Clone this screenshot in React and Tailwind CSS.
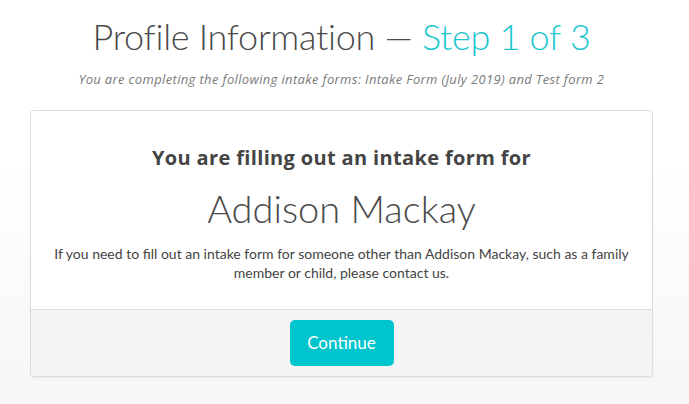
import React from "react";

const App = () => {
  return (
    <div
      className="min-h-screen w-full bg-gradient-to-b from-white from-40% to-[#f6f6f6] text-[#444]"
      style={{ fontFamily: "Lato, 'Open Sans', sans-serif" }}
    >
      <div className="ml-[30px] w-[623px] pt-[13px] pb-[28px]">
        <h1 className="text-center text-[36px] font-light leading-[46px] tracking-[-0.3px] text-[#4a4a4a]">
          Profile Information — <span className="text-[#1cc6cf]">Step 1 of 3</span>
        </h1>
        <p className="mt-[11px] text-center font-['Open_Sans'] text-[13px] italic tracking-[0.35px] text-[#7a7a7a]">
          You are completing the following intake forms: Intake Form (July 2019) and Test form 2
        </p>

        <div className="mt-[20px] overflow-hidden rounded-[4px] border border-[#dcdcdc] bg-white shadow-[0_1px_2px_rgba(0,0,0,0.06)]">
          <div className="px-2 pt-[33px] pb-[27px] text-center">
            <h2 className="font-['Open_Sans'] text-[20px] font-bold leading-[28px] tracking-[0.35px] text-[#444]">
              You are filling out an intake form for
            </h2>
            <div className="mt-[14px] text-[38px] font-light leading-[44px] text-[#4a4a4a]">
              Addison Mackay
            </div>
            <p className="mt-[14px] text-[14px] leading-[19px] text-[#444]">
              <span className="whitespace-nowrap">
                If you need to fill out an intake form for someone other than Addison Mackay, such as a family
              </span>
              <br />
              member or child, please contact us.
            </p>
          </div>
          <div className="flex justify-center border-t border-[#dcdcdc] bg-[#f4f4f4] pt-[10px] pb-[10px]">
            <button
              type="button"
              className="h-[46px] w-[104px] rounded-[5px] bg-[#00c5cd] text-[17px] text-white"
            >
              Continue
            </button>
          </div>
        </div>
      </div>
    </div>
  );
};

export default App;
